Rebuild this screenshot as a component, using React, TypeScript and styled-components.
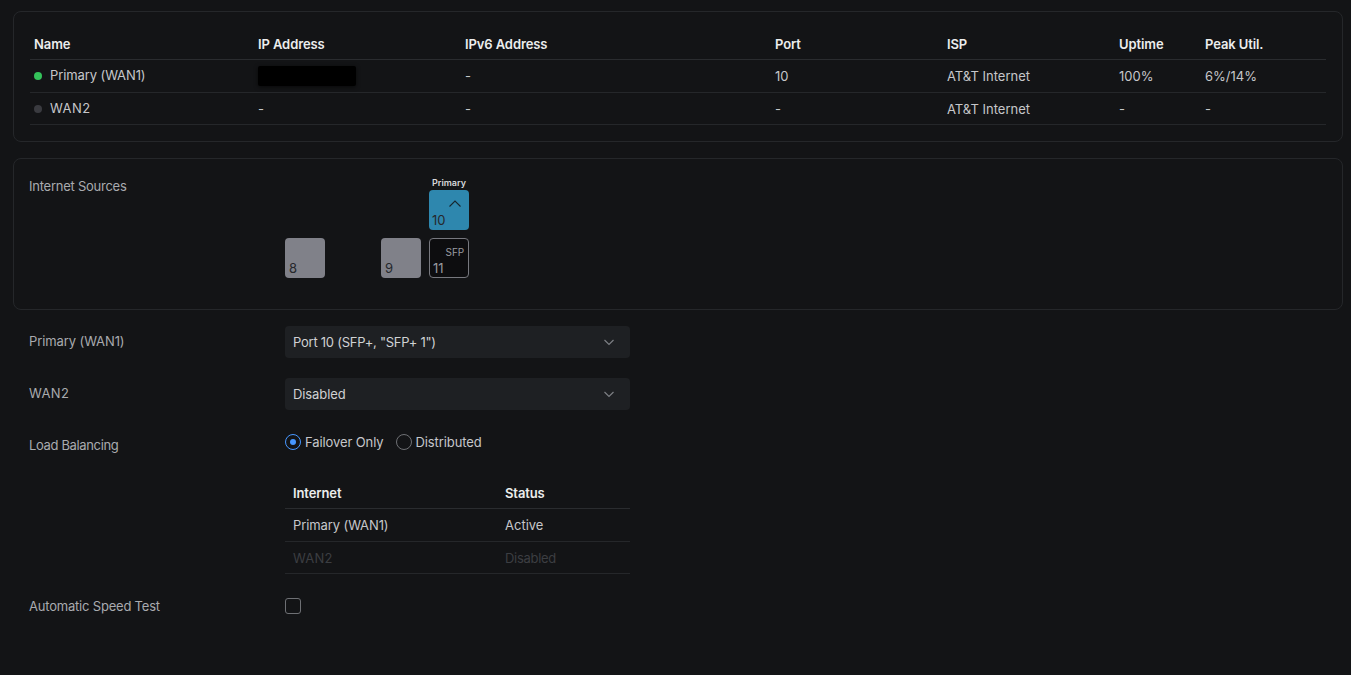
import React from "react";
import styled, { createGlobalStyle } from "styled-components";

const Global = createGlobalStyle`
  html, body { margin: 0; padding: 0; background: #131416; }
  body { font-family: Inter, "Liberation Sans", sans-serif; font-size: 13px; color: #c6c7ca; height: 675px; overflow: hidden; }
`;

const Page = styled.div`
  padding: 11px 8px 0 13px;
  display: flex;
  flex-direction: column;
`;

const Card = styled.section`
  box-sizing: border-box;
  border: 1px solid #25272a;
  border-radius: 8px;
`;

const SummaryCard = styled(Card)`
  height: 131px;
  padding: 16px 16px 0;
`;

const SourcesCard = styled(Card)`
  height: 152px;
  margin-top: 16px;
  padding: 19px 15px 15px;
  display: grid;
  grid-template-columns: 256px 1fr;
`;

const TableHead = styled.div<{ $cols: string; $h: number }>`
  display: grid;
  grid-template-columns: ${(p) => p.$cols};
  height: ${(p) => p.$h}px;
  align-items: center;
  box-sizing: border-box;
  border-bottom: 1px solid #2a2c2f;
  font-weight: 600;
  letter-spacing: -0.1px;
  color: #eceded;
`;

const TableRow = styled.div<{ $cols: string; $h: number; $dim?: boolean }>`
  display: grid;
  grid-template-columns: ${(p) => p.$cols};
  height: ${(p) => p.$h}px;
  align-items: center;
  box-sizing: border-box;
  border-bottom: 1px solid #25272a;
  color: ${(p) => (p.$dim ? "#3c3e42" : "#c6c7ca")};
`;

const Cell = styled.div<{ $pad?: number; $lift?: number }>`
  padding-left: ${(p) => p.$pad ?? 4}px;
  padding-bottom: ${(p) => p.$lift ?? 0}px;
  display: flex;
  align-items: center;
  white-space: nowrap;
`;

const NameText = styled.span<{ $track: number }>`
  letter-spacing: ${(p) => p.$track}px;
`;

const Dot = styled.span<{ $color: string }>`
  width: 8px;
  height: 8px;
  border-radius: 50%;
  background: ${(p) => p.$color};
  margin: 2px 8px 0 0;
`;

const Redacted = styled.div`
  width: 98px;
  height: 20px;
  background: #000;
  border-radius: 2px;
  box-shadow: 0 1px 4px rgba(0, 0, 0, 0.6);
`;

const Label = styled.div`
  color: #a9abaf;
  letter-spacing: -0.25px;
`;

const PortGrid = styled.div`
  display: grid;
  grid-template-columns: repeat(4, 40px);
  grid-auto-rows: 40px;
  gap: 8px;
  margin-top: 12px;
`;

const Port = styled.div<{ $kind: "active" | "idle" | "sfp" }>`
  position: relative;
  box-sizing: border-box;
  border-radius: 4px;
  background: ${(p) => (p.$kind === "active" ? "#2e87ae" : p.$kind === "idle" ? "#808189" : "#0d0d0f")};
  border: ${(p) => (p.$kind === "sfp" ? "1px solid #77787e" : "none")};
  color: ${(p) => (p.$kind === "sfp" ? "#9a9ba0" : "#26282c")};
`;

const PortNumber = styled.span<{ $x: number; $y: number }>`
  position: absolute;
  left: ${(p) => p.$x}px;
  bottom: ${(p) => p.$y}px;
  font-size: 13px;
  line-height: 16px;
`;

const SfpTag = styled.span`
  position: absolute;
  right: 4px;
  top: 7px;
  font-size: 10px;
  line-height: 12px;
  letter-spacing: -0.1px;
`;

const PortCaption = styled.span`
  position: absolute;
  left: -2px;
  right: -2px;
  top: -13px;
  text-align: center;
  font-size: 9px;
  line-height: 12px;
  font-weight: 600;
  color: #d6d7da;
`;

const PortIcon = styled.svg`
  position: absolute;
  left: 20px;
  top: 10px;
`;

const Spacer = styled.div``;

const Form = styled.div`
  padding: 16px 0 0 16px;
  display: flex;
  flex-direction: column;
`;

const FormRow = styled.div<{ $mb: number }>`
  display: grid;
  grid-template-columns: 256px 345px;
  margin-bottom: ${(p) => p.$mb}px;
`;

const FieldLabel = styled(Label)<{ $top: number; $track?: number }>`
  padding-top: ${(p) => p.$top}px;
  line-height: 16px;
  letter-spacing: ${(p) => p.$track ?? -0.25}px;
`;

const Select = styled.div`
  box-sizing: border-box;
  height: 32px;
  background: #1e2023;
  border-radius: 4px;
  padding: 0 15px 0 8px;
  display: flex;
  align-items: center;
  justify-content: space-between;
  color: #d0d1d3;
`;

const SelectText = styled.span<{ $track: number }>`
  letter-spacing: ${(p) => p.$track}px;
`;

const Radios = styled.div`
  display: flex;
  align-items: center;
  gap: 12px;
  height: 16px;
  letter-spacing: -0.1px;
`;

const RadioItem = styled.div`
  display: flex;
  align-items: center;
  gap: 4px;
  color: #c6c7ca;
`;

const RadioMark = styled.span<{ $on?: boolean }>`
  box-sizing: border-box;
  width: 16px;
  height: 16px;
  border-radius: 50%;
  border: 1px solid ${(p) => (p.$on ? "#4797ff" : "#6e7074")};
  display: flex;
  align-items: center;
  justify-content: center;
  &::after {
    content: "";
    display: ${(p) => (p.$on ? "block" : "none")};
    width: 6px;
    height: 6px;
    border-radius: 50%;
    background: #4797ff;
  }
`;

const Checkbox = styled.span`
  display: block;
  box-sizing: border-box;
  width: 16px;
  height: 16px;
  border: 1px solid #6e7074;
  border-radius: 3px;
`;

const Chevron = () => (
  <svg width="12" height="12" viewBox="0 0 12 12" fill="none" stroke="#7d7f84" strokeWidth="1.2">
    <path d="M1.5 4l4.5 4.5L10.5 4" />
  </svg>
);

const mainCols = "224px 207px 310px 172px 172px 86px 125px";
const subCols = "212px 133px";

const mainRows = [
  { color: "#34c25a", name: "Primary (WAN1)", track: -0.1, ip: true, v6: "-", port: "10", isp: "AT&T Internet", up: "100%", peak: "6%/14%", h: 33, lift: 2 },
  { color: "#3a3b40", name: "WAN2", track: 0.5, ip: false, v6: "-", port: "-", isp: "AT&T Internet", up: "-", peak: "-", h: 32, lift: 1 },
];

export default function App() {
  return (
    <Page>
      <Global />
      <SummaryCard>
        <TableHead $cols={mainCols} $h={32}>
          {["Name", "IP Address", "IPv6 Address", "Port", "ISP", "Uptime", "Peak Util."].map((t) => (
            <Cell key={t}>{t}</Cell>
          ))}
        </TableHead>
        {mainRows.map((r) => (
          <TableRow key={r.name} $cols={mainCols} $h={r.h}>
            <Cell $lift={r.lift}>
              <Dot $color={r.color} />
              <NameText $track={r.track}>{r.name}</NameText>
            </Cell>
            <Cell>{r.ip ? <Redacted /> : "-"}</Cell>
            <Cell>{r.v6}</Cell>
            <Cell>{r.port}</Cell>
            <Cell>{r.isp}</Cell>
            <Cell>{r.up}</Cell>
            <Cell>{r.peak}</Cell>
          </TableRow>
        ))}
      </SummaryCard>

      <SourcesCard>
        <Label>Internet Sources</Label>
        <PortGrid>
          <Spacer />
          <Spacer />
          <Spacer />
          <Port $kind="active">
            <PortCaption>Primary</PortCaption>
            <PortIcon width="12" height="7" viewBox="0 0 12 7" fill="none" stroke="#16262e" strokeWidth="1.1">
              <path d="M.5 6.5l5.5-5.5 5.5 5.5" />
            </PortIcon>
            <PortNumber $x={3} $y={2}>10</PortNumber>
          </Port>
          <Port $kind="idle">
            <PortNumber $x={4} $y={2}>8</PortNumber>
          </Port>
          <Spacer />
          <Port $kind="idle">
            <PortNumber $x={4} $y={2}>9</PortNumber>
          </Port>
          <Port $kind="sfp">
            <SfpTag>SFP</SfpTag>
            <PortNumber $x={3} $y={1}>11</PortNumber>
          </Port>
        </PortGrid>
      </SourcesCard>

      <Form>
        <FormRow $mb={20}>
          <FieldLabel $top={7} $track={-0.1}>Primary (WAN1)</FieldLabel>
          <Select>
            <SelectText $track={-0.25}>Port 10 (SFP+, "SFP+ 1")</SelectText>
            <Chevron />
          </Select>
        </FormRow>
        <FormRow $mb={24}>
          <FieldLabel $top={7} $track={0.4}>WAN2</FieldLabel>
          <Select>
            <SelectText $track={-0.1}>Disabled</SelectText>
            <Chevron />
          </Select>
        </FormRow>
        <FormRow $mb={26}>
          <FieldLabel $top={3} $track={-0.35}>Load Balancing</FieldLabel>
          <Radios>
            <RadioItem>
              <RadioMark $on />
              Failover Only
            </RadioItem>
            <RadioItem>
              <RadioMark />
              Distributed
            </RadioItem>
          </Radios>
        </FormRow>
        <FormRow $mb={24}>
          <Spacer />
          <div>
            <TableHead $cols={subCols} $h={30}>
              <Cell $pad={8} $lift={2}>Internet</Cell>
              <Cell $pad={8} $lift={2}>Status</Cell>
            </TableHead>
            <TableRow $cols={subCols} $h={33}>
              <Cell $pad={8} $lift={1}>
                <NameText $track={-0.1}>Primary (WAN1)</NameText>
              </Cell>
              <Cell $pad={8} $lift={1}>Active</Cell>
            </TableRow>
            <TableRow $cols={subCols} $h={32} $dim>
              <Cell $pad={8}>
                <NameText $track={0.2}>WAN2</NameText>
              </Cell>
              <Cell $pad={8}>
                <NameText $track={-0.3}>Disabled</NameText>
              </Cell>
            </TableRow>
          </div>
        </FormRow>
        <FormRow $mb={0}>
          <FieldLabel $top={0} $track={-0.2}>Automatic Speed Test</FieldLabel>
          <Checkbox />
        </FormRow>
      </Form>
    </Page>
  );
}
